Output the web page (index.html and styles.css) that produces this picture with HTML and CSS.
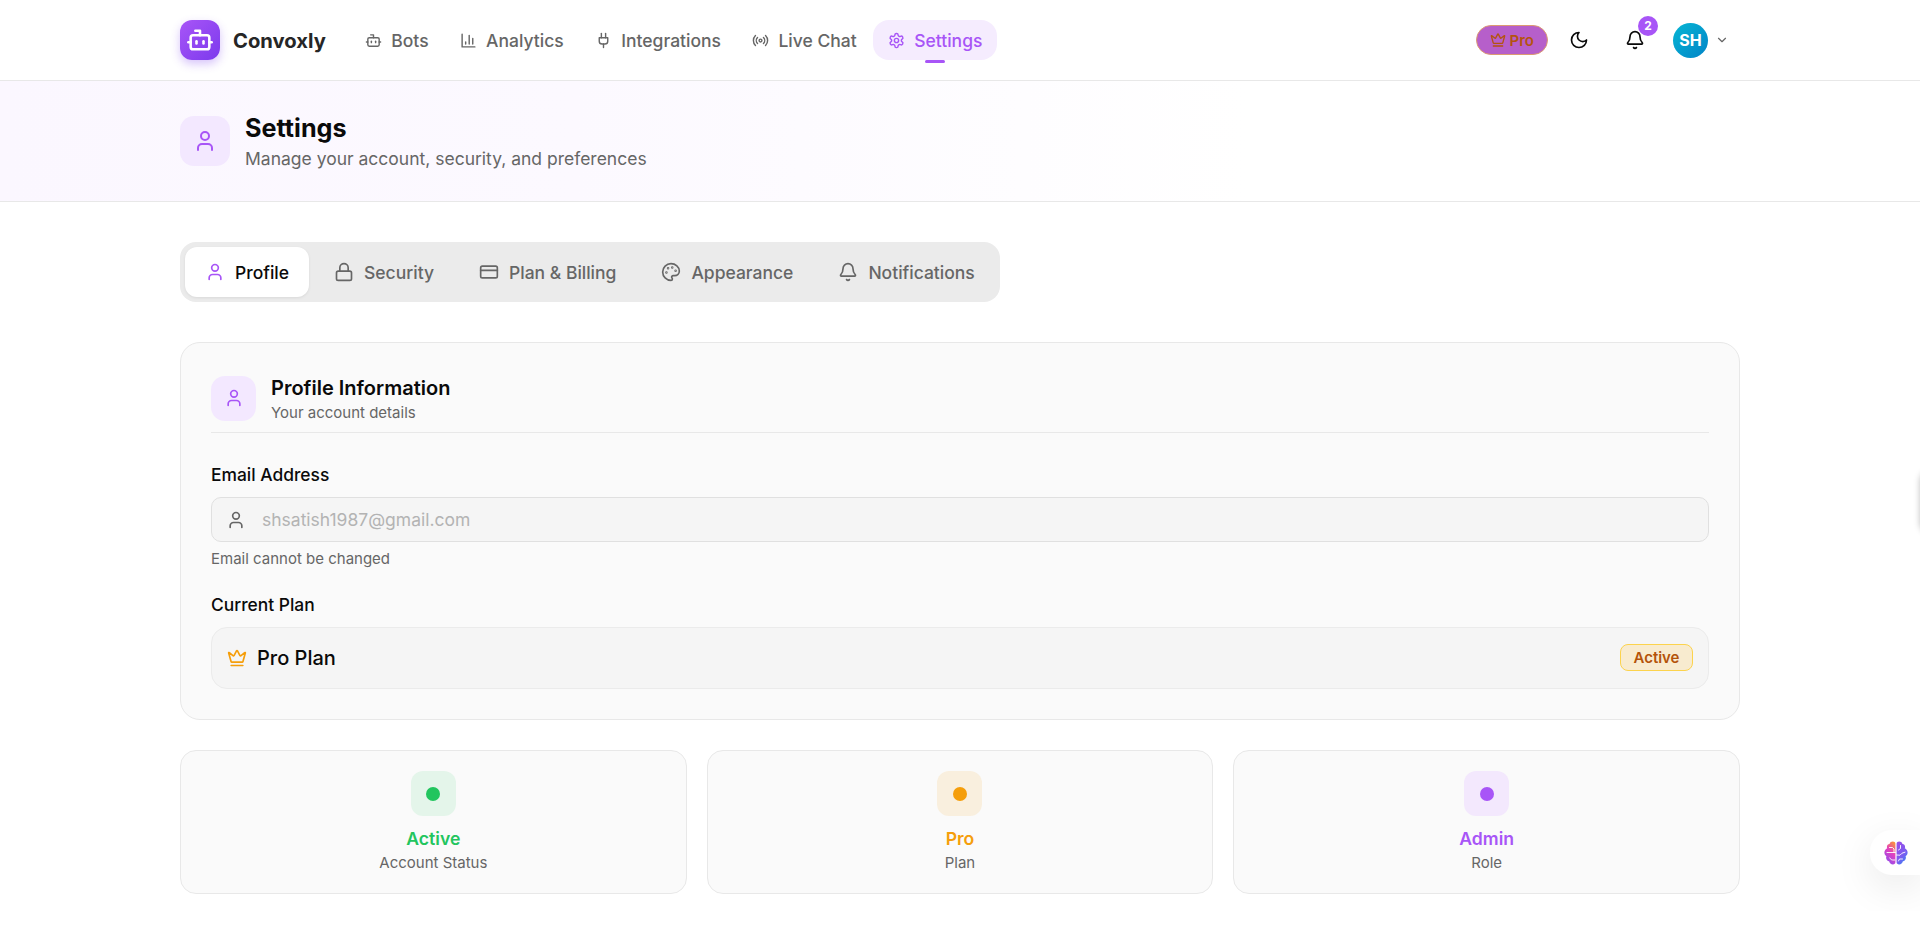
FILE: index.html
```html
<!DOCTYPE html>
<html lang="en">
<head>
  <meta charset="UTF-8" />
  <meta name="viewport" content="width=device-width, initial-scale=1.0"/>
  <title>Settings - Convoxly</title>
  <link rel="stylesheet" href="styles.css">
</head>
<body>
  <header class="topbar">
    <div class="logo">
      <span class="logo-mark">
        <svg viewBox="0 0 24 24" class="logo-icon"><path d="M12 8V4H8"/><rect x="4" y="8" width="16" height="12" rx="2"/><path d="M2 14h2"/><path d="M20 14h2"/><path d="M15 13v2"/><path d="M9 13v2"/></svg>
      </span>
      <span class="logo-text">Convoxly</span>
    </div>
    <nav class="nav">
      <a class="nav-link">
        <svg viewBox="0 0 24 24" class="icon"><path d="M12 8V4H8"/><rect x="4" y="8" width="16" height="12" rx="2"/><path d="M2 14h2"/><path d="M20 14h2"/><path d="M15 13v2"/><path d="M9 13v2"/></svg>
        Bots
      </a>
      <a class="nav-link">
        <svg viewBox="0 0 24 24" class="icon"><path d="M3 3v18h18"/><path d="M18 17V9"/><path d="M13 17V5"/><path d="M8 17v-3"/></svg>
        Analytics
      </a>
      <a class="nav-link">
        <svg viewBox="0 0 24 24" class="icon"><path d="M12 22v-5"/><path d="M9 8V2"/><path d="M15 8V2"/><path d="M18 8v5a4 4 0 0 1-4 4h-4a4 4 0 0 1-4-4V8Z"/></svg>
        Integrations
      </a>
      <a class="nav-link">
        <svg viewBox="0 0 24 24" class="icon"><path d="M4.9 19.1C1 15.2 1 8.8 4.9 4.9"/><path d="M7.8 16.2c-2.3-2.3-2.3-6.1 0-8.5"/><circle cx="12" cy="12" r="2"/><path d="M16.2 7.8c2.3 2.3 2.3 6.1 0 8.5"/><path d="M19.1 4.9C23 8.8 23 15.1 19.1 19"/></svg>
        Live Chat
      </a>
      <a class="nav-link nav-active">
        <svg viewBox="0 0 24 24" class="icon"><path d="M12.22 2h-.44a2 2 0 0 0-2 2v.18a2 2 0 0 1-1 1.73l-.43.25a2 2 0 0 1-2 0l-.15-.08a2 2 0 0 0-2.73.73l-.22.38a2 2 0 0 0 .73 2.73l.15.1a2 2 0 0 1 1 1.72v.51a2 2 0 0 1-1 1.74l-.15.09a2 2 0 0 0-.73 2.73l.22.38a2 2 0 0 0 2.73.73l.15-.08a2 2 0 0 1 2 0l.43.25a2 2 0 0 1 1 1.73V20a2 2 0 0 0 2 2h.44a2 2 0 0 0 2-2v-.18a2 2 0 0 1 1-1.73l.43-.25a2 2 0 0 1 2 0l.15.08a2 2 0 0 0 2.73-.73l.22-.39a2 2 0 0 0-.73-2.73l-.15-.08a2 2 0 0 1-1-1.74v-.5a2 2 0 0 1 1-1.74l.15-.09a2 2 0 0 0 .73-2.73l-.22-.38a2 2 0 0 0-2.73-.73l-.15.08a2 2 0 0 1-2 0l-.43-.25a2 2 0 0 1-1-1.73V4a2 2 0 0 0-2-2z"/><circle cx="12" cy="12" r="3"/></svg>
        Settings
      </a>
    </nav>
    <div class="topbar-right">
      <span class="pro-pill">
        <svg viewBox="0 0 24 24" class="icon-sm"><path d="M11.562 3.266a.5.5 0 0 1 .876 0L15.39 8.87a1 1 0 0 0 1.516.294L21.183 5.5a.5.5 0 0 1 .798.519l-2.834 10.246a1 1 0 0 1-.956.734H5.81a1 1 0 0 1-.957-.734L2.02 6.02a.5.5 0 0 1 .798-.519l4.276 3.664a1 1 0 0 0 1.516-.294z"/><path d="M5 21h14"/></svg>
        Pro
      </span>
      <span class="theme-btn">
        <svg viewBox="0 0 24 24" class="icon-lg"><path d="M12 3a6 6 0 0 0 9 9 9 9 0 1 1-9-9Z"/></svg>
      </span>
      <span class="bell-btn">
        <svg viewBox="0 0 24 24" class="icon-lg"><path d="M10.268 21a2 2 0 0 0 3.464 0"/><path d="M3.262 15.326A1 1 0 0 0 4 17h16a1 1 0 0 0 .74-1.673C19.41 13.956 18 12.499 18 8A6 6 0 0 0 6 8c0 4.499-1.411 5.956-2.738 7.326"/></svg>
        <span class="bell-badge">2</span>
      </span>
      <span class="avatar">SH</span>
      <svg viewBox="0 0 24 24" class="chevron"><path d="m6 9 6 6 6-6"/></svg>
    </div>
  </header>

  <section class="page-head">
    <span class="page-head-icon">
      <svg viewBox="0 0 24 24" class="icon-head"><path d="M19 21v-2a4 4 0 0 0-4-4H9a4 4 0 0 0-4 4v2"/><circle cx="12" cy="7" r="4"/></svg>
    </span>
    <div>
      <h1>Settings</h1>
      <p>Manage your account, security, and preferences</p>
    </div>
  </section>

  <main class="content">
    <div class="tabs">
      <a class="tab tab-active">
        <svg viewBox="0 0 24 24" class="tab-icon"><path d="M19 21v-2a4 4 0 0 0-4-4H9a4 4 0 0 0-4 4v2"/><circle cx="12" cy="7" r="4"/></svg>
        Profile
      </a>
      <a class="tab">
        <svg viewBox="0 0 24 24" class="tab-icon"><rect x="3" y="11" width="18" height="11" rx="2"/><path d="M7 11V7a5 5 0 0 1 10 0v4"/></svg>
        Security
      </a>
      <a class="tab">
        <svg viewBox="0 0 24 24" class="tab-icon"><rect x="2" y="5" width="20" height="14" rx="2"/><path d="M2 10h20"/></svg>
        Plan &amp; Billing
      </a>
      <a class="tab">
        <svg viewBox="0 0 24 24" class="tab-icon"><circle cx="13.5" cy="6.5" r=".5"/><circle cx="17.5" cy="10.5" r=".5"/><circle cx="8.5" cy="7.5" r=".5"/><circle cx="6.5" cy="12.5" r=".5"/><path d="M12 2C6.5 2 2 6.5 2 12s4.5 10 10 10c.926 0 1.648-.746 1.648-1.688 0-.437-.18-.835-.437-1.125-.29-.289-.438-.652-.438-1.125a1.64 1.64 0 0 1 1.668-1.668h1.996c3.051 0 5.555-2.503 5.555-5.554C21.965 6.012 17.461 2 12 2z"/></svg>
        Appearance
      </a>
      <a class="tab">
        <svg viewBox="0 0 24 24" class="tab-icon"><path d="M10.268 21a2 2 0 0 0 3.464 0"/><path d="M3.262 15.326A1 1 0 0 0 4 17h16a1 1 0 0 0 .74-1.673C19.41 13.956 18 12.499 18 8A6 6 0 0 0 6 8c0 4.499-1.411 5.956-2.738 7.326"/></svg>
        Notifications
      </a>
    </div>

    <section class="card">
      <div class="card-head">
        <span class="card-head-icon">
          <svg viewBox="0 0 24 24" class="tab-icon"><path d="M19 21v-2a4 4 0 0 0-4-4H9a4 4 0 0 0-4 4v2"/><circle cx="12" cy="7" r="4"/></svg>
        </span>
        <div>
          <h2>Profile Information</h2>
          <p>Your account details</p>
        </div>
      </div>

      <label class="field-label">Email Address</label>
      <div class="email-box">
        <svg viewBox="0 0 24 24" class="tab-icon"><path d="M19 21v-2a4 4 0 0 0-4-4H9a4 4 0 0 0-4 4v2"/><circle cx="12" cy="7" r="4"/></svg>
        <span>shsatish1987@gmail.com</span>
      </div>
      <p class="field-hint">Email cannot be changed</p>

      <label class="field-label">Current Plan</label>
      <div class="plan-box">
        <svg viewBox="0 0 24 24" class="plan-crown"><path d="M11.562 3.266a.5.5 0 0 1 .876 0L15.39 8.87a1 1 0 0 0 1.516.294L21.183 5.5a.5.5 0 0 1 .798.519l-2.834 10.246a1 1 0 0 1-.956.734H5.81a1 1 0 0 1-.957-.734L2.02 6.02a.5.5 0 0 1 .798-.519l4.276 3.664a1 1 0 0 0 1.516-.294z"/><path d="M5 21h14"/></svg>
        <span class="plan-name">Pro Plan</span>
        <span class="plan-badge">Active</span>
      </div>
    </section>

    <div class="stats">
      <div class="stat">
        <span class="stat-icon stat-green"><i></i></span>
        <strong class="text-green">Active</strong>
        <small>Account Status</small>
      </div>
      <div class="stat">
        <span class="stat-icon stat-orange"><i></i></span>
        <strong class="text-orange">Pro</strong>
        <small>Plan</small>
      </div>
      <div class="stat">
        <span class="stat-icon stat-purple"><i></i></span>
        <strong class="text-purple">Admin</strong>
        <small>Role</small>
      </div>
    </div>
  </main>

  <div class="edge-tab"></div>

  <div class="ai-float">
    <svg viewBox="0 0 24 24" class="brain">
      <defs>
        <linearGradient id="brainLeft" x1="0.8" y1="0" x2="0.3" y2="1">
          <stop offset="0" stop-color="#fb923c"/>
          <stop offset="0.45" stop-color="#e23fc0"/>
          <stop offset="1" stop-color="#8b4ff0"/>
        </linearGradient>
        <linearGradient id="brainRight" x1="0.2" y1="0" x2="0.8" y2="1">
          <stop offset="0" stop-color="#9b4fe8"/>
          <stop offset="0.6" stop-color="#7a5cf0"/>
          <stop offset="1" stop-color="#2f8cf5"/>
        </linearGradient>
      </defs>
      <path fill="url(#brainLeft)" d="M11.4 2.6C11.4 1.2 10.2.4 8.8.4 7.3.4 6 1.3 5.7 2.7 4 3 2.9 4.3 2.9 5.9c0 .5.1.9.3 1.3C1.5 8 .4 9.6.4 11.5c0 1.6.8 3 2 3.8-.2.5-.3.9-.3 1.4 0 1.8 1.3 3.3 3 3.6.4 1.8 1.9 3.2 3.8 3.2 1.5 0 2.5-.9 2.5-2.2z"/>
      <path fill="url(#brainRight)" d="M12.6 2.6C12.6 1.2 13.8.4 15.2.4c1.5 0 2.8.9 3.1 2.3 1.7.3 2.8 1.6 2.8 3.2 0 .5-.1.9-.3 1.3 1.7.8 2.8 2.4 2.8 4.3 0 1.6-.8 3-2 3.8.2.5.3.9.3 1.4 0 1.8-1.3 3.3-3 3.6-.4 1.8-1.9 3.2-3.8 3.2-1.5 0-2.5-.9-2.5-2.2z"/>
      <g class="brain-lines">
        <path d="M3 11.5h8.4"/>
        <path d="M5.5 6.5h3l1.5 1.5v3.5"/>
        <path d="M5.8 17c.6 1.4 1.8 2 3 2h2"/>
        <path d="M16.5 4.5v3l-2 1.5"/>
        <path d="M21 11.2l-3 1-2 2-3.4-.2"/>
        <path d="M18.5 18h-3l-1 2"/>
      </g>
    </svg>
  </div>
</body>
</html>
```

FILE: styles.css
```css
* {
  box-sizing: border-box;
}

body {
  margin: 0;
  background-color: #ffffff;
  color: #0a0a0a;
  font-family: 'Inter', 'Liberation Sans', sans-serif;
  overflow: hidden;
}

svg {
  fill: none;
  stroke: currentColor;
  stroke-width: 2;
  stroke-linecap: round;
  stroke-linejoin: round;
  flex-shrink: 0;
}

.icon { width: 17px; height: 17px; }
.icon-sm { width: 16px; height: 16px; }
.icon-lg { width: 20px; height: 20px; }
.icon-head { width: 24px; height: 24px; }

/* top bar */
.topbar {
  display: flex;
  align-items: center;
  height: 81px;
  padding: 0 180px;
  border-bottom: 1px solid #e8e8e8;
  background-color: #ffffff;
}

.logo {
  display: flex;
  align-items: center;
  gap: 13px;
  margin-right: 24.5px;
}

.logo-mark {
  display: flex;
  align-items: center;
  justify-content: center;
  width: 40px;
  height: 40px;
  border-radius: 12px;
  background: linear-gradient(135deg, #a855f7, #7c3aed);
  box-shadow: 0 4px 10px rgba(124, 58, 237, 0.3);
  color: #ffffff;
}

.logo-icon { width: 28px; height: 28px; stroke-width: 2.2; }

.logo-text {
  font-size: 20.2px;
  font-weight: 700;
  color: #262626;
}

.nav {
  display: flex;
  align-items: center;
  gap: 2px;
}

.nav-link {
  position: relative;
  display: flex;
  align-items: center;
  gap: 9.5px;
  height: 40px;
  padding: 0 14.5px;
  border-radius: 16px;
  font-size: 17.5px;
  font-weight: 500;
  color: #666666;
}

.nav-active {
  background-color: #f5ecfe;
  color: #a855f7;
}

.nav-active::after {
  content: "";
  position: absolute;
  left: 50%;
  bottom: -3px;
  width: 20px;
  height: 3px;
  margin-left: -10px;
  border-radius: 2px;
  background-color: #a855f7;
}

.topbar-right {
  display: flex;
  align-items: center;
  margin-left: auto;
  padding-right: 11px;
}

.pro-pill {
  display: flex;
  align-items: center;
  gap: 4px;
  height: 30px;
  padding: 0 13px;
  border: 1px solid #dc9a72;
  border-radius: 15px;
  background-color: #b65fca;
  color: #b4530f;
  font-size: 15px;
  font-weight: 600;
}

.theme-btn {
  display: flex;
  margin-left: 21px;
}

.bell-btn {
  position: relative;
  display: flex;
  margin-left: 36px;
}

.bell-badge {
  position: absolute;
  top: -14px;
  left: 13px;
  width: 20px;
  height: 20px;
  border-radius: 50%;
  background-color: #a855f7;
  color: #ffffff;
  font-size: 12px;
  font-weight: 700;
  line-height: 20px;
  text-align: center;
}

.avatar {
  display: flex;
  align-items: center;
  justify-content: center;
  width: 35px;
  height: 35px;
  margin-left: 28px;
  border-radius: 50%;
  background: linear-gradient(135deg, #06b6d4, #0284c7);
  color: #ffffff;
  font-size: 16px;
  font-weight: 700;
}

.chevron {
  width: 14px;
  height: 14px;
  margin-left: 7px;
  color: #666666;
}

/* page heading */
.page-head {
  display: flex;
  align-items: center;
  gap: 15px;
  height: 121px;
  padding: 0 180px;
  border-bottom: 1px solid #e8e8e8;
  background: linear-gradient(90deg, #fbf7ff 0%, #fcf9ff 30%, #ffffff 65%);
}

.page-head-icon {
  display: flex;
  align-items: center;
  justify-content: center;
  width: 50px;
  height: 50px;
  border-radius: 14px;
  background-color: #f3e8ff;
  color: #a855f7;
}

.page-head h1 {
  margin: 0 0 3px;
  font-size: 25.2px;
  font-weight: 700;
  line-height: 32px;
}

.page-head p {
  margin: 0;
  font-size: 17.5px;
  line-height: 24px;
  color: #666666;
}

/* tabs */
.content {
  padding: 40px 180px 0;
}

.tabs {
  display: inline-flex;
  gap: 5px;
  padding: 5px;
  border-radius: 16px;
  background-color: #ebebeb;
  vertical-align: top;
}

.tab {
  display: flex;
  align-items: center;
  gap: 10px;
  height: 50px;
  padding: 0 20px;
  border-radius: 12px;
  font-size: 17.5px;
  font-weight: 500;
  color: #666666;
}

.tab-icon { width: 20px; height: 20px; }

.tab-active {
  background-color: #ffffff;
  color: #0a0a0a;
  box-shadow: 0 1px 3px rgba(0, 0, 0, 0.08);
}

.tab-active .tab-icon {
  color: #a855f7;
}

/* profile card */
.card {
  height: 378px;
  margin-top: 40px;
  padding: 33px 30px 0;
  border: 1px solid #e8e8e8;
  border-radius: 20px;
  background-color: #fafafa;
}

.card-head {
  display: flex;
  align-items: center;
  gap: 15px;
  height: 57px;
  margin-bottom: 30px;
  padding-bottom: 12px;
  border-bottom: 1px solid #e8e8e8;
}

.card-head-icon {
  display: flex;
  align-items: center;
  justify-content: center;
  width: 45px;
  height: 45px;
  border-radius: 14px;
  background-color: #f3e8ff;
  color: #a855f7;
}

.card-head h2 {
  margin: 0 0 1px;
  padding-top: 3px;
  font-size: 20px;
  font-weight: 600;
  line-height: 26px;
}

.card-head p {
  margin: 0;
  font-size: 15px;
  line-height: 22px;
  color: #666666;
}

.field-label {
  display: block;
  margin-top: 24px;
  font-size: 17.4px;
  font-weight: 500;
  line-height: 24px;
}

.card-head + .field-label {
  margin-top: 0;
}

.email-box {
  display: flex;
  align-items: center;
  gap: 16px;
  height: 45px;
  margin-top: 10px;
  padding: 0 14px;
  border: 1px solid #e0e0e0;
  border-radius: 10px;
  background-color: #f5f5f5;
  color: #666666;
  font-size: 17.5px;
}

.email-box span {
  color: #b3b3b3;
}

.field-hint {
  margin: 7px 0 0;
  font-size: 15px;
  line-height: 20px;
  color: #666666;
}

.plan-box {
  display: flex;
  align-items: center;
  gap: 10px;
  height: 62px;
  margin-top: 10px;
  padding: 0 15px;
  border: 1px solid #ebebeb;
  border-radius: 16px;
  background-color: #f5f5f5;
}

.plan-crown { width: 20px; height: 20px; color: #f59e0b; }

.plan-name {
  font-size: 20px;
  font-weight: 500;
}

.plan-badge {
  margin-left: auto;
  margin-top: -2px;
  padding: 0 12.5px;
  height: 27px;
  border: 1px solid #fcd34d;
  border-radius: 8px;
  background-color: #f8ebcf;
  color: #b45309;
  font-size: 15px;
  font-weight: 600;
  line-height: 25px;
}

/* status cards */
.stats {
  display: grid;
  grid-template-columns: repeat(3, 1fr);
  gap: 20px;
  margin-top: 30px;
}

.stat {
  display: flex;
  flex-direction: column;
  align-items: center;
  height: 144px;
  padding-top: 20px;
  border: 1px solid #e8e8e8;
  border-radius: 16px;
  background-color: #fafafa;
}

.stat-icon {
  display: flex;
  align-items: center;
  justify-content: center;
  width: 45px;
  height: 45px;
  border-radius: 12px;
}

.stat-icon i {
  width: 14px;
  height: 14px;
  border-radius: 50%;
}

.stat-green { background-color: #e4f5ea; }
.stat-green i { background-color: #22c55e; }
.stat-orange { background-color: #f9efde; }
.stat-orange i { background-color: #f59e0b; }
.stat-purple { background-color: #f3e8fd; }
.stat-purple i { background-color: #a855f7; }

.stat strong {
  margin-top: 11px;
  font-size: 17.6px;
  font-weight: 600;
  line-height: 24px;
}

.stat small {
  margin-top: 2px;
  font-size: 15px;
  line-height: 20px;
  color: #666666;
}

.text-green { color: #22c55e; }
.text-orange { color: #f59e0b; }
.text-purple { color: #a855f7; }

/* floating bits on the right edge */
.edge-tab {
  position: fixed;
  top: 470px;
  right: -40px;
  width: 40px;
  height: 64px;
  border-radius: 12px;
  background-color: #ffffff;
  box-shadow: 0 0 6px rgba(0, 0, 0, 0.25);
}

.ai-float {
  position: fixed;
  top: 830px;
  right: 0;
  display: flex;
  align-items: center;
  width: 50px;
  height: 45px;
  padding-left: 14px;
  border-radius: 22px 0 0 22px;
  background-color: #ffffff;
  box-shadow: 0 12px 40px rgba(0, 0, 0, 0.09);
  clip-path: inset(-50px 0 -36px -60px);
}

.brain {
  width: 24px;
  height: 24px;
  stroke: none;
}

.brain-lines path {
  fill: none;
  stroke: #ffffff;
  stroke-width: 0.9;
}
```
